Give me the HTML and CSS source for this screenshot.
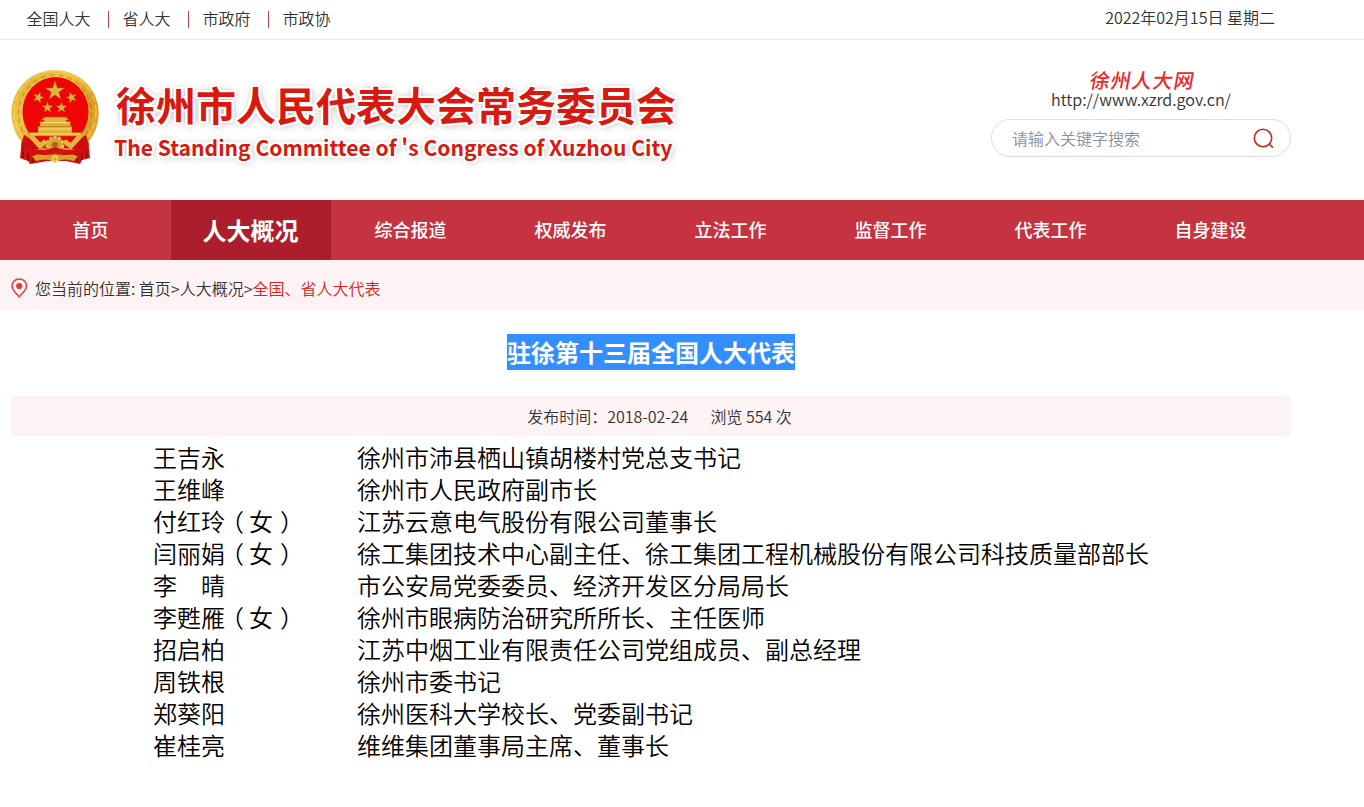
FILE: index.html
```html
<!DOCTYPE html>
<html lang="zh-CN">
<head>
<meta charset="utf-8">
<title>徐州市人民代表大会常务委员会</title>
<link rel="stylesheet" href="styles.css">
</head>
<body>
<div class="topbar">
  <div class="wrap topbar-inner">
    <ul class="toplinks"><li>全国人大</li><li>省人大</li><li>市政府</li><li>市政协</li></ul>
    <div class="date">2022年02月15日 星期二</div>
  </div>
</div>
<header class="wrap header">
  <svg class="emblem" viewBox="0 0 100 105">
    <defs>
      <linearGradient id="gold" x1="0" y1="0" x2="1" y2="1">
        <stop offset="0" stop-color="#dfa92f"/><stop offset=".35" stop-color="#f0c548"/><stop offset=".65" stop-color="#d89b22"/><stop offset="1" stop-color="#e8b63a"/>
      </linearGradient>
      <path id="star" d="M0-10 2.4-3.1 9.5-3.1 3.8 1.2 5.9 8.1 0 4 -5.9 8.1 -3.8 1.2 -9.5-3.1 -2.4-3.1Z"/>
    </defs>
    <path d="M17 74 15 93 23 96 25 99 43 96 61 96 75 99 77 95 85 93 83 74Z" fill="#cf1010"/>
    <path d="M19 78 18 93M24 80 23 95M29 85 28 98M81 78 82 93M76 80 77 95M71 85 72 98" stroke="#7e0808" stroke-width="1.2"/>
    <ellipse cx="50" cy="48.500" rx="43.800" ry="43.500" fill="url(#gold)"/>
    <ellipse cx="50" cy="48.500" rx="36.500" ry="38.500" fill="none" stroke="#a96e12" stroke-width="1.500" stroke-dasharray="5 4" opacity=".45"/>
    <ellipse cx="50" cy="47" rx="41" ry="41" fill="none" stroke="#ffe588" stroke-width="1.300" stroke-dasharray="7 3" opacity=".5"/>
    <ellipse cx="50.500" cy="47" rx="33" ry="35" fill="#ef0505"/>
    <g fill="#e3b23c" stroke="#a96713" stroke-width=".5">
      <use href="#star" transform="translate(50 26)"/>
      <use href="#star" transform="translate(33.500 32.500) rotate(18) scale(.58)"/>
      <use href="#star" transform="translate(66.500 32.500) rotate(-18) scale(.58)"/>
      <use href="#star" transform="translate(42.500 42.500) scale(.58)"/>
      <use href="#star" transform="translate(56.500 42.500) scale(.58)"/>
      <path d="M40 52H61L64 55H61V56.500H65.500V62H35V56.500H39V55H36Z"/>
      <path d="M33 61.500H67V67.500H77L75 71H25L23 67.500H33Z"/>
    </g>
    <path d="M25 69H75M34 64H66M37 57.500H63" stroke="#fbe078" stroke-width="1"/>
    <path d="M19 70Q33 79 41 75Q50 69 59 75Q67 79 81 70L84 80Q71 87 63 83L50 84 37 83Q29 87 16 80Z" fill="#cc0e0e"/>
    <path d="M25 70 35 81 41 76M59 76 66 81 76 70" stroke="#e8b63d" stroke-width="5" fill="none"/>
    <circle cx="50" cy="80" r="8" fill="#d9a42c" stroke="#edc254" stroke-width="3" stroke-dasharray="3 1.500"/>
    <circle cx="50" cy="80" r="3" fill="#ac6518"/>
    <path d="M27 91Q40 86 50 90Q60 86 73 91L69 96Q57 92 50 98Q43 92 31 96Z" fill="#d9a12a"/>
    <path d="M19 81Q36 87 44 84Q50 81 56 84Q65 87 82 81L82 86Q64 92 50 89Q36 92 18 86Z" fill="#d21010"/>
    <circle cx="50" cy="94" r="2.500" fill="none" stroke="#f5da70" stroke-width="1.300"/>
  </svg>
  <div class="brand">
    <h1>徐州市人民代表大会常务委员会</h1>
    <p>The Standing Committee of 's Congress of Xuzhou City</p>
  </div>
  <div class="side">
    <div class="script-name">徐州人大网</div>
    <div class="url">http://www.xzrd.gov.cn/</div>
    <div class="search"><span>请输入关键字搜索</span>
      <svg class="search-icon" viewBox="0 0 22 22"><circle cx="10" cy="10" r="8.700"/><path d="M16 16 20 19.700"/></svg>
    </div>
  </div>
</header>
<nav class="nav"><ul class="wrap"><li>首页</li><li class="active">人大概况</li><li>综合报道</li><li>权威发布</li><li>立法工作</li><li>监督工作</li><li>代表工作</li><li>自身建设</li></ul></nav>
<div class="crumbs">
  <div class="wrap crumbs-inner">
    <svg class="pin" viewBox="0 0 18 20"><path d="M8.200 1C4 1 1 4 1 8c0 4 4.500 7.800 7.200 10.800C11 15.800 15.500 12 15.500 8c0-4-3-7-7.300-7Z"/><circle cx="8.200" cy="8" r="3.100"/></svg>
    <span>您当前的位置: 首页&gt;人大概况&gt;<b>全国、省人大代表</b></span>
  </div>
</div>
<main class="wrap">
  <h2><span>驻徐第十三届全国人大代表</span></h2>
  <div class="meta"><span>发布时间：2018-02-24</span><span>浏览 554 次</span></div>
  <dl class="people">
    <dt>王吉永</dt><dd>徐州市沛县栖山镇胡楼村党总支书记</dd>
    <dt>王维峰</dt><dd>徐州市人民政府副市长</dd>
    <dt>付红玲<i class="open">（</i>女<i class="close">）</i></dt><dd>江苏云意电气股份有限公司董事长</dd>
    <dt>闫丽娟<i class="open">（</i>女<i class="close">）</i></dt><dd>徐工集团技术中心副主任、徐工集团工程机械股份有限公司科技质量部部长</dd>
    <dt>李　晴</dt><dd>市公安局党委委员、经济开发区分局局长</dd>
    <dt>李甦雁<i class="open">（</i>女<i class="close">）</i></dt><dd>徐州市眼病防治研究所所长、主任医师</dd>
    <dt>招启柏</dt><dd>江苏中烟工业有限责任公司党组成员、副总经理</dd>
    <dt>周铁根</dt><dd>徐州市委书记</dd>
    <dt>郑葵阳</dt><dd>徐州医科大学校长、党委副书记</dd>
    <dt>崔桂亮</dt><dd>维维集团董事局主席、董事长</dd>
  </dl>
</main>
</body>
</html>
```
FILE: styles.css
```css
* { box-sizing: border-box; margin: 0; padding: 0; }
body { font: 350 16px/24px "Noto Sans CJK SC", sans-serif; color: #333; background: #fff; overflow: hidden; }
ul { list-style: none; }
.wrap { width: 1280px; margin-left: 11px; }
.topbar { height: 40px; border-bottom: 1px solid #ebebeb; }
.topbar-inner { display: flex; justify-content: space-between; padding: 5px 16px 0; }
.toplinks { display: flex; padding-top: 1px; margin-left: -0.5px; }
.toplinks li { display: flex; align-items: center; }
.toplinks li + li::before { content: ""; width: 1px; height: 17px; margin: 2px 14px 0 17px; background: #b5454a; }
.header { height: 160px; display: flex; }
.emblem { width: 100px; height: 105px; margin: 25px 0 0 -6px; flex: none; }
.brand { padding: 36px 0 0 11px; white-space: nowrap; color: #d7190f; text-shadow: 2px 0 #fff, -2px 0 #fff, 0 2px #fff, 0 -2px #fff, 2px 2px #fff, -2px -2px #fff, 2px -2px #fff, -2px 2px #fff, 0 0 6px #aaa, 2px 2px 8px #ccc; }
.brand h1 { font-size: 40px; line-height: 56px; font-weight: 700; }
.brand p { font-size: 21.080px; line-height: 28px; font-weight: 700; margin: 1px 0 0 -2px; }
.side { width: 300px; margin-left: auto; padding-top: 28px; text-align: center; }
.script-name { height: 20px; font-size: 20px; line-height: 23px; font-weight: 500; color: #ed2626; transform: skewX(-10deg); letter-spacing: 1px; padding-left: 4px; }
.url { line-height: 22px; font-size: 16.100px; }
.search { height: 38px; margin-top: 9px; padding: 0 15px 0 20px; border: 1px solid #ddd; border-radius: 19px; display: flex; align-items: center; justify-content: space-between; color: #87929b; }
.search-icon { width: 22px; height: 22px; margin-top: 1px; fill: none; stroke: #be2c20; stroke-width: 1.6; }
.nav { height: 60px; background: #c63340; color: #fff; }
.nav ul { display: flex; }
.nav li { width: 160px; line-height: 59px; height: 60px; padding-right: 1px; text-align: center; font-size: 18px; font-weight: 500; }
.nav .active { background: #ac1e2b; font-size: 24px; font-weight: 700; }
.crumbs { height: 50px; background: #fdf3f4; }
.crumbs-inner { display: flex; align-items: center; padding-top: 16px; }
.pin { width: 18px; height: 20px; margin: 0 6px 1px 0; fill: none; stroke: #e13c3c; stroke-width: 1.5; }
.pin circle { fill: #e13c3c; stroke: none; }
.crumbs b { font-weight: 350; color: #d8231c; }
h2 { display: flex; justify-content: center; padding-top: 24px; height: 86px; font-size: 24px; font-weight: 700; color: #fff; }
h2 span { height: 36px; line-height: 35px; background: #338fff; }
.meta { height: 40px; line-height: 41px; background: #fdf2f4; display: flex; justify-content: center; gap: 22px; padding-left: 17px; }
.people { display: grid; grid-template-columns: 204px auto; margin: 5px 0 0 142px; font-size: 24px; line-height: 32px; color: #000; white-space: nowrap; }
.people i { font-style: normal; font-feature-settings: "halt"; }
.people .open { margin: 0 5px 0 7px; }
.people .close { margin-left: 7px; }
```
